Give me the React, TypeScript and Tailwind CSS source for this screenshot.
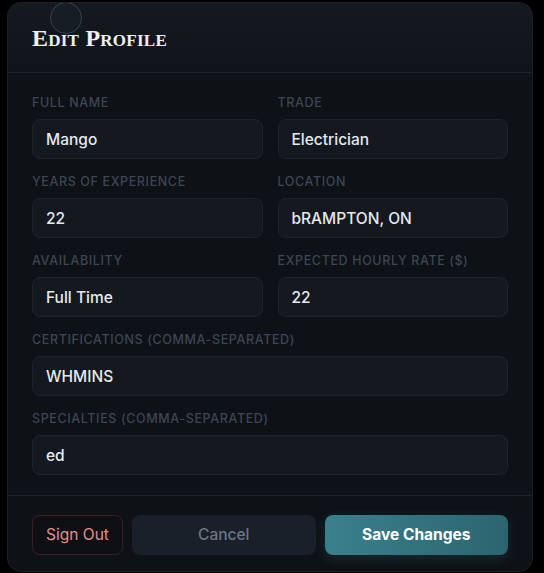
import { useState } from 'react'

type Field = { label: string; value: string; full?: boolean }

const fields: Field[] = [
  { label: 'Full Name', value: 'Mango' },
  { label: 'Trade', value: 'Electrician' },
  { label: 'Years of Experience', value: '22' },
  { label: 'Location', value: 'bRAMPTON, ON' },
  { label: 'Availability', value: 'Full Time' },
  { label: 'Expected Hourly Rate ($)', value: '22' },
  { label: 'Certifications (comma-separated)', value: 'WHMINS', full: true },
  { label: 'Specialties (comma-separated)', value: 'ed', full: true },
]

function FormField({ field }: { field: Field }) {
  const [value, setValue] = useState(field.value)
  return (
    <div className={field.full ? 'col-span-2' : ''}>
      <label className="block h-4 text-[12.5px] leading-4 font-medium uppercase tracking-[0.05em] text-[#3d4654] mb-2">
        {field.label}
      </label>
      <input
        value={value}
        onChange={(e) => setValue(e.target.value)}
        className="w-full h-10 px-[13px] rounded-lg bg-[#14181f] border border-[#1d232c] text-[15.5px] font-medium text-[#e6e8eb] outline-none"
      />
    </div>
  )
}

export default function App() {
  return (
    <div
      className="min-h-[573px] bg-black px-[7px] pt-[2px] pb-[2px]"
      style={{ fontFamily: 'Inter, "Noto Sans", sans-serif' }}
    >
      <div className="relative w-[526px] rounded-[14px] border border-[#1c2128] bg-[#0e1116] overflow-hidden">
        {/* decorative ring */}
        <div className="absolute left-[42px] top-[-1px] w-[32px] h-[32px] rounded-full border border-[#34454b] bg-[#18222a]/60" />

        <div className="h-[70px] flex items-center px-6 border-b border-[#1d232b] bg-gradient-to-b from-[#151a20] to-[#10141a]">
          <h2
            className="text-[24px] leading-none font-bold text-[#eef0f2] tracking-[0.01em] pt-[1px]"
            style={{ fontFamily: '"Liberation Serif", "DejaVu Serif", serif', fontVariant: 'small-caps' }}
          >
            Edit Profile
          </h2>
        </div>

        <div className="px-6 pt-[22px] pb-5 grid grid-cols-2 gap-x-[15px] gap-y-[15px] border-b border-[#1d232b]">
          {fields.map((f) => (
            <FormField key={f.label} field={f} />
          ))}
        </div>

        <div className="flex gap-[9px] px-6 pt-[19px] pb-[16px]">
          <button className="h-10 w-[91px] rounded-lg border border-[#3d1c22] bg-[#0d0f13] text-[15.5px] text-[#e6908d]">
            Sign Out
          </button>
          <button className="h-10 flex-1 rounded-lg bg-[#19202a] text-[15.5px] font-medium text-[#6c7584]">
            Cancel
          </button>
          <button className="h-10 flex-1 rounded-lg bg-gradient-to-r from-[#3a808c] to-[#2c6570] text-[15.5px] font-bold text-white shadow-[0_4px_14px_rgba(50,120,135,0.25)]">
            Save Changes
          </button>
        </div>
      </div>
    </div>
  )
}
